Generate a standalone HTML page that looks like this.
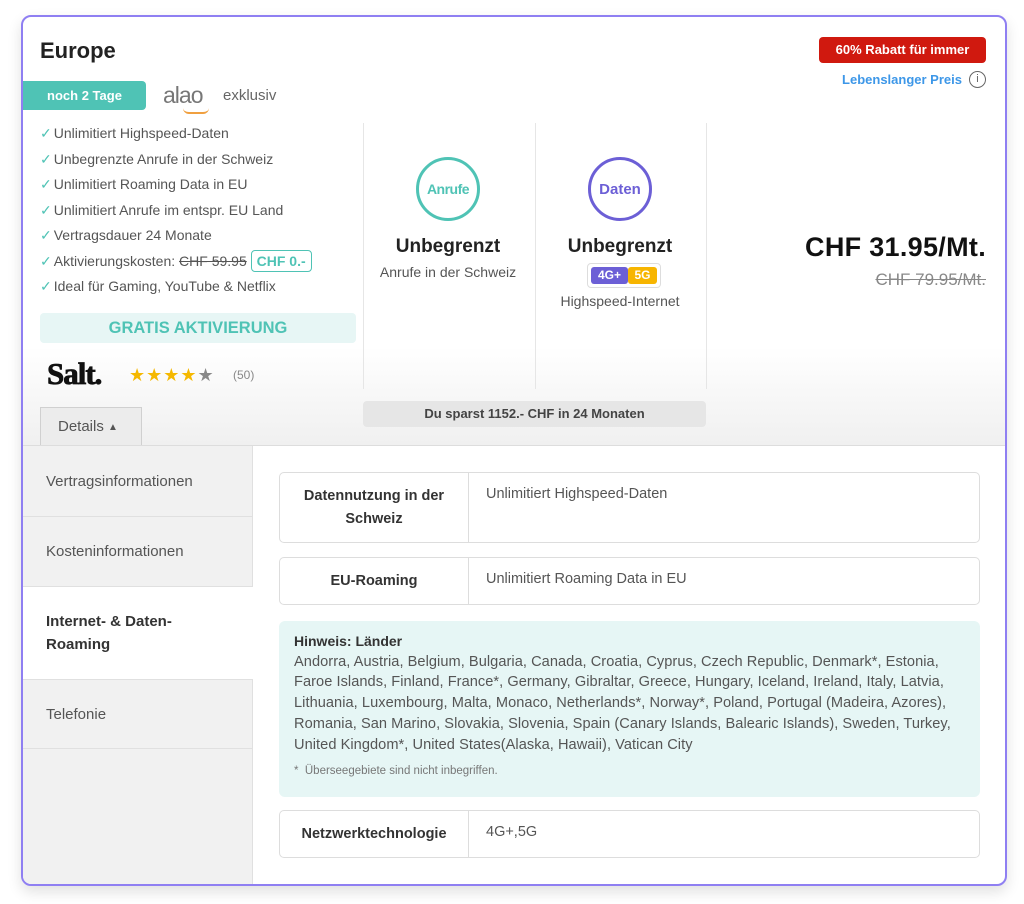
<!DOCTYPE html>
<html><head><meta charset="utf-8"><style>
*{box-sizing:border-box;margin:0;padding:0}
body{width:1024px;height:904px;background:#fff;font-family:"Liberation Sans",sans-serif;position:relative;overflow:hidden;color:#444}
.a{position:absolute;white-space:nowrap}
.card{position:absolute;left:21px;top:15px;width:986px;height:871px;border:2px solid #8f7ff2;border-radius:10px;overflow:hidden;background:#fff;box-shadow:0 6px 14px rgba(0,0,0,.12)}
.chk{color:#4fc3b5;margin-right:2px}
.li{position:absolute;left:17px;font-size:14px;color:#555}
.vd{position:absolute;top:106px;width:1px;height:266px;background:#e6e6e6}
.circ{position:absolute;width:64px;height:64px;border-radius:50%;border:3px solid;display:flex;align-items:center;justify-content:center;font-weight:bold;font-size:15px}
.big{position:absolute;font-size:19px;font-weight:bold;color:#222;text-align:center;width:170px}
.sub{position:absolute;font-size:14px;color:#555;text-align:center;width:170px}
.side{position:absolute;left:0;width:230px;background:#f1f1f1;border-bottom:1px solid #e0e0e0;border-right:1px solid #e0e0e0;font-size:15px;color:#555;padding-left:23px;display:flex;align-items:center}
.row{position:absolute;left:256px;width:701px;border:1px solid #ddd;border-radius:5px;font-size:14.5px}
.row .k{position:absolute;left:0;top:0;bottom:0;width:189px;border-right:1px solid #ddd;display:flex;align-items:center;justify-content:center;text-align:center;font-weight:bold;color:#333;line-height:23px}
.row .v{position:absolute;left:206px;color:#555}
</style></head><body>
<div class="card">
 <div style="position:absolute;left:0;top:330px;width:986px;height:98px;background:linear-gradient(#fff,#f0f0f0)"></div>
 <div class="a" style="left:17px;top:21px;font-size:22px;font-weight:bold;color:#222">Europe</div>
 <div class="a" style="left:0;top:64px;width:123px;height:29px;background:#4fc3b5;border-radius:0 4px 4px 0;color:#fff;font-weight:bold;font-size:13px;text-align:center;line-height:29px">noch 2 Tage</div>
 <div class="a" style="left:140px;top:65px;font-size:23px;color:#777;letter-spacing:-1px">alao</div>
 <div class="a" style="left:160px;top:91px;width:26px;height:6px;border-bottom:2px solid #f0a040;border-radius:0 0 14px 14px"></div>
 <div class="a" style="left:200px;top:70px;font-size:15px;color:#666">exklusiv</div>
 <div class="li" style="top:108px"><span class="chk">✓</span>Unlimitiert Highspeed-Daten</div>
 <div class="li" style="top:134px"><span class="chk">✓</span>Unbegrenzte Anrufe in der Schweiz</div>
 <div class="li" style="top:159px"><span class="chk">✓</span>Unlimitiert Roaming Data in EU</div>
 <div class="li" style="top:185px"><span class="chk">✓</span>Unlimitiert Anrufe im entspr. EU Land</div>
 <div class="li" style="top:210px"><span class="chk">✓</span>Vertragsdauer 24 Monate</div>
 <div class="li" style="top:233px"><span class="chk">✓</span>Aktivierungskosten: <s>CHF 59.95</s> <span style="display:inline-block;border:1px solid #4fc3b5;border-radius:4px;color:#4fc3b5;font-weight:bold;padding:2px 5px">CHF 0.-</span></div>
 <div class="li" style="top:261px"><span class="chk">✓</span>Ideal für Gaming, YouTube &amp; Netflix</div>
 <div class="a" style="left:17px;top:296px;width:316px;height:30px;background:#e7f6f5;border-radius:4px;color:#4fc3b5;font-weight:bold;font-size:16.5px;text-align:center;line-height:30px">GRATIS AKTIVIERUNG</div>
 <div class="a" style="left:24px;top:339px;font-family:'Liberation Serif',serif;font-weight:bold;font-size:31px;color:#111;letter-spacing:-1px;-webkit-text-stroke:0.8px #111">Salt.</div>
 <div class="a" style="left:106px;top:348px;font-size:18px;color:#f5b800;letter-spacing:1px">★★★★<span style="color:#888">★</span></div>
 <div class="a" style="left:210px;top:351px;font-size:12px;color:#888">(50)</div>
 <div class="vd" style="left:340px"></div><div class="vd" style="left:512px"></div><div class="vd" style="left:683px"></div>
 <div class="circ" style="left:393px;top:140px;border-color:#4fc3b5;color:#4fc3b5;font-size:14px;letter-spacing:-0.5px">Anrufe</div>
 <div class="circ" style="left:565px;top:140px;border-color:#6c5fd6;color:#6c5fd6">Daten</div>
 <div class="big" style="left:340px;top:219px">Unbegrenzt</div>
 <div class="sub" style="left:340px;top:247px">Anrufe in der Schweiz</div>
 <div class="big" style="left:512px;top:219px">Unbegrenzt</div>
 <div class="a" style="left:564px;top:246px;width:74px;height:25px;border:1px solid #ddd;border-radius:4px;background:#fff"></div>
 <div class="a" style="left:568px;top:250px;width:37px;height:17px;background:#6c5fd6;border-radius:3px;color:#fff;font-weight:bold;font-size:12px;text-align:center;line-height:17px">4G+</div>
 <div class="a" style="left:605px;top:250px;width:29px;height:17px;background:#f7b500;border-radius:3px;color:#fff;font-weight:bold;font-size:12px;text-align:center;line-height:17px">5G</div>
 <div class="sub" style="left:512px;top:276px">Highspeed-Internet</div>
 <div class="a" style="right:19px;top:20px;width:167px;height:26px;background:#d0190f;border-radius:4px;color:#fff;font-weight:bold;font-size:13px;text-align:center;line-height:26px">60% Rabatt für immer</div>
 <div class="a" style="right:43px;top:55px;font-size:13px;font-weight:bold;color:#3d97e8">Lebenslanger Preis</div>
 <div class="a" style="right:19px;top:54px;width:17px;height:17px;border:1.5px solid #666;border-radius:50%;font-size:11px;text-align:center;line-height:15px;color:#666">i</div>
 <div class="a" style="right:19px;top:215px;font-size:27px;font-weight:bold;color:#111;letter-spacing:0.3px">CHF 31.95/Mt.</div>
 <div class="a" style="right:19px;top:253px;font-size:17px;color:#888;text-decoration:line-through">CHF 79.95/Mt.</div>
 <div class="a" style="left:340px;top:384px;width:343px;height:26px;background:#e6e6e6;border-radius:4px;font-size:13px;font-weight:bold;color:#444;text-align:center;line-height:26px">Du sparst 1152.- CHF in 24 Monaten</div>
 <div class="a" style="left:17px;top:390px;width:102px;height:39px;background:#ececec;border:1px solid #d0d0d0;border-bottom:none;font-size:15px;color:#555;padding:10px 0 0 17px">Details <span style="font-size:10px;vertical-align:1px">▲</span></div>
 <div class="a" style="left:0;top:428px;width:986px;height:1px;background:#ddd"></div>
 <div class="side" style="top:429px;height:71px">Vertragsinformationen</div>
 <div class="side" style="top:500px;height:70px">Kosteninformationen</div>
 <div class="side" style="top:570px;height:93px;background:#fff;font-weight:bold;color:#333;line-height:23px;border-right:none;white-space:normal">Internet- &amp; Daten-<br>Roaming</div>
 <div class="side" style="top:663px;height:69px">Telefonie</div>
 <div class="side" style="top:732px;height:140px;border-bottom:none"></div>
 <div class="row" style="top:455px;height:71px"><div class="k">Datennutzung in der<br>Schweiz</div><div class="v" style="top:13px">Unlimitiert Highspeed-Daten</div></div>
 <div class="row" style="top:540px;height:48px"><div class="k">EU-Roaming</div><div class="v" style="top:13px">Unlimitiert Roaming Data in EU</div></div>
 <div class="a" style="left:256px;top:604px;width:701px;height:176px;background:#e6f6f5;border-radius:6px;padding:10px 15px;white-space:normal;font-size:14px;color:#555;line-height:20.7px">
  <b style="color:#333">Hinweis: Länder</b><div style="white-space:nowrap;font-size:14.6px;letter-spacing:0.05px;line-height:20.7px">Andorra, Austria, Belgium, Bulgaria, Canada, Croatia, Cyprus, Czech Republic, Denmark*, Estonia,<br>Faroe Islands, Finland, France*, Germany, Gibraltar, Greece, Hungary, Iceland, Ireland, Italy, Latvia,<br>Lithuania, Luxembourg, Malta, Monaco, Netherlands*, Norway*, Poland, Portugal (Madeira, Azores),<br>Romania, San Marino, Slovakia, Slovenia, Spain (Canary Islands, Balearic Islands), Sweden, Turkey,<br>United Kingdom*, United States(Alaska, Hawaii), Vatican City</div>
  <div style="font-size:11.5px;color:#777;margin-top:6px">*&nbsp; Überseegebiete sind nicht inbegriffen.</div>
 </div>
 <div class="row" style="top:793px;height:48px"><div class="k">Netzwerktechnologie</div><div class="v" style="top:13px">4G+,5G</div></div>
</div>
</body></html>
